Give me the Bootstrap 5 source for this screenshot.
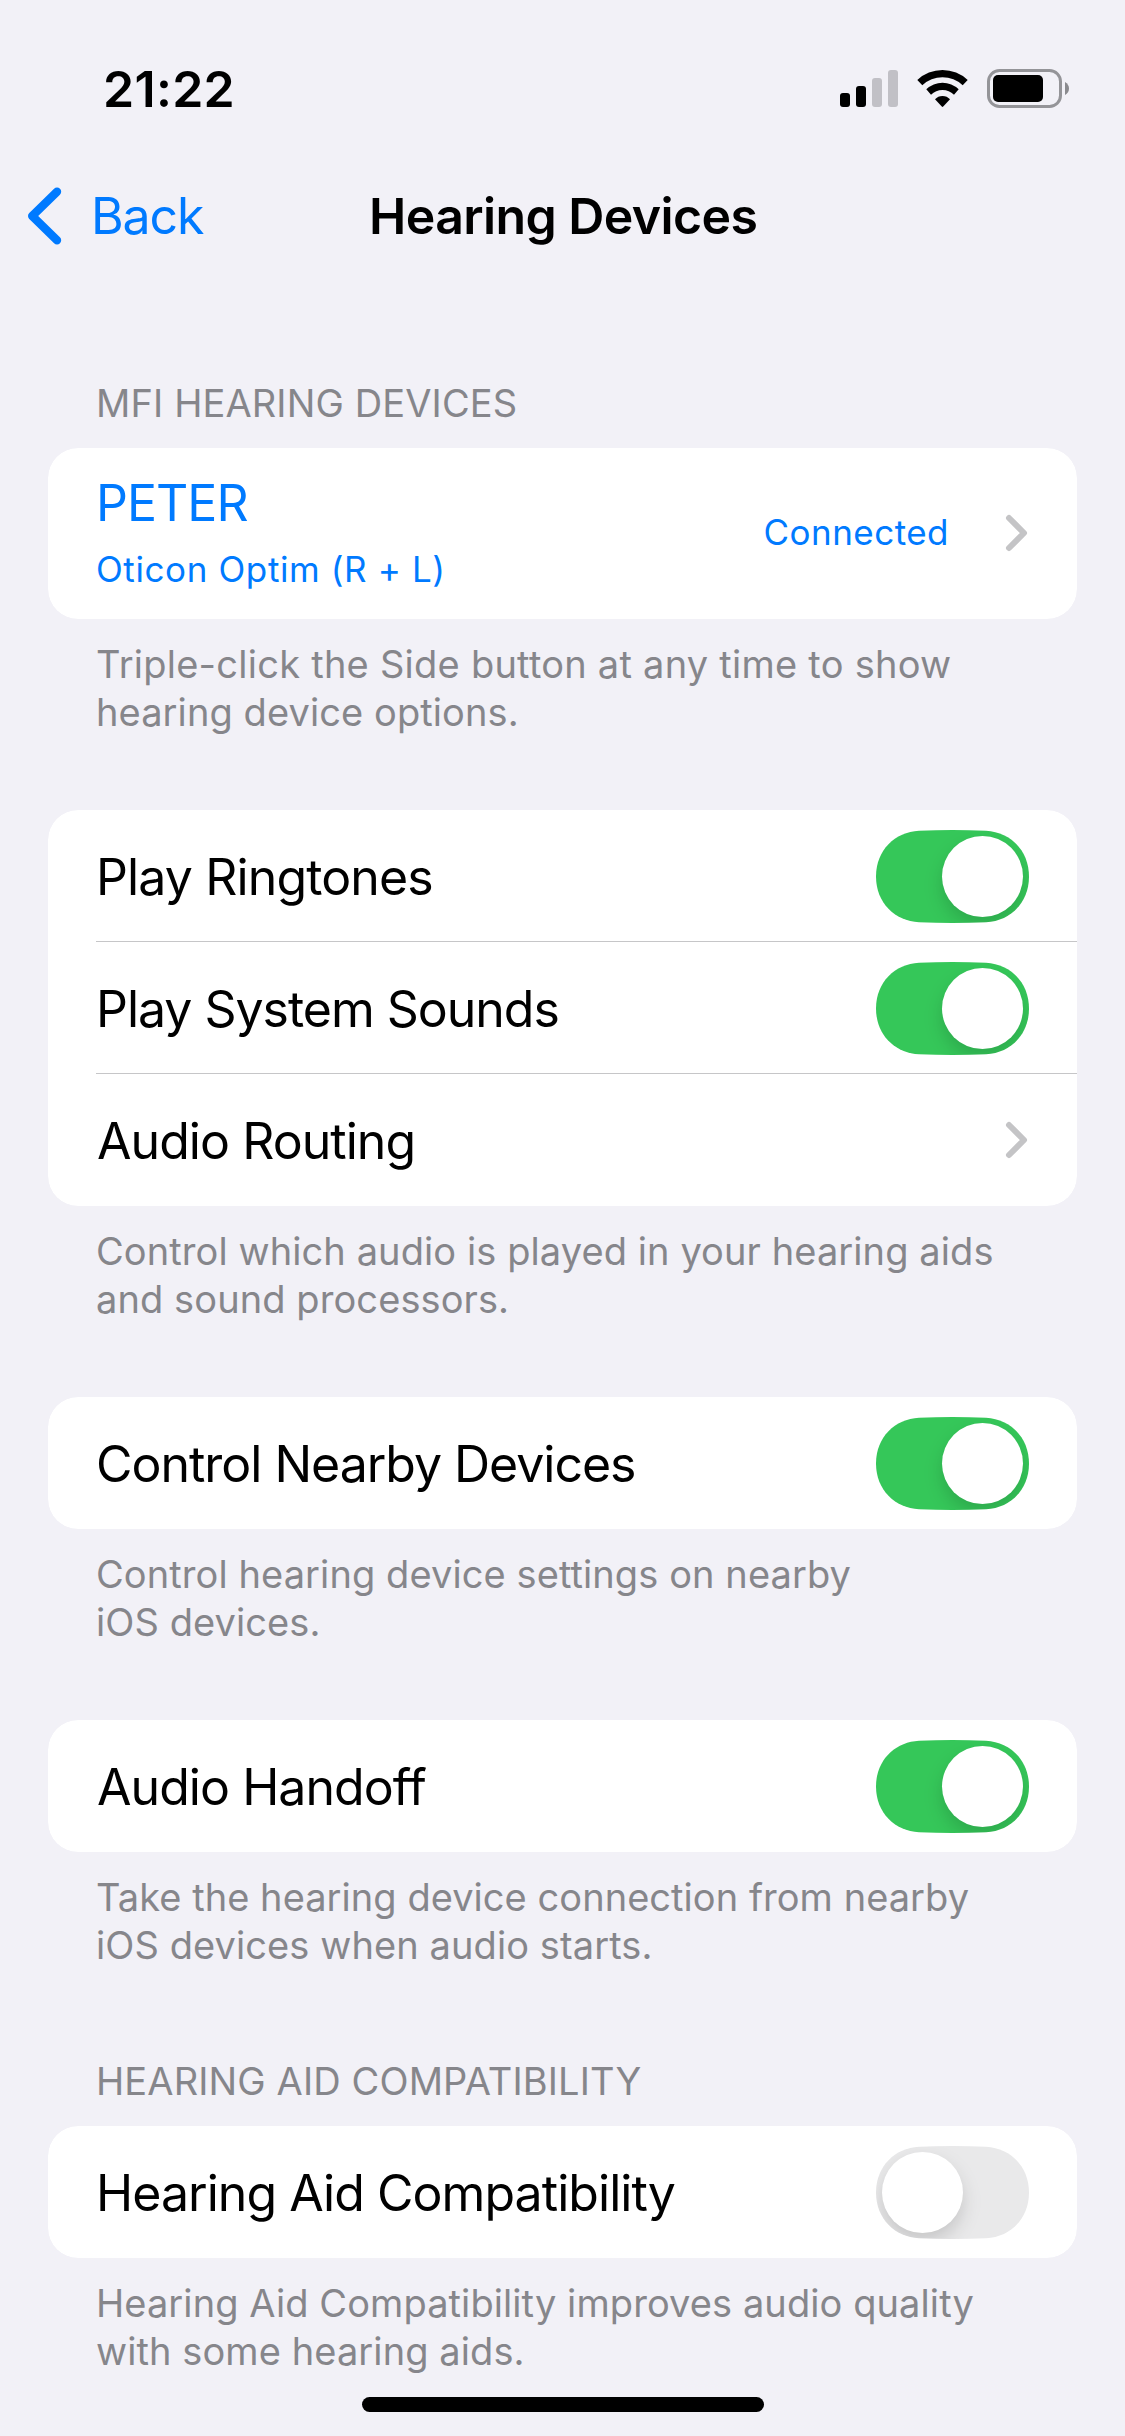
<!DOCTYPE html>
<html lang="en">
<head>
<meta charset="utf-8">
<meta name="viewport" content="width=device-width, initial-scale=1">
<title>Hearing Devices</title>
<link href="https://cdn.jsdelivr.net/npm/bootstrap@5.3.0/dist/css/bootstrap.min.css" rel="stylesheet">
<style>
  body { background: #f2f1f7; color: #000; font-family: Inter, "Liberation Sans", sans-serif; font-size: 50px; line-height: 60px; }
  .screen { width: 1125px; height: 2436px; }
  svg { display: block; flex: none; }
  .status-bar { padding: 59px 55px 0 103px; height: 119px; }
  .clock { letter-spacing: .3px; }
  .status-icons { gap: 19px; padding-top: 10px; }
  .nav-row { margin-top: 67px; height: 60px; padding-left: 27px; }
  .back-link { width: 342px; color: #007aff; gap: 29px; letter-spacing: -1.15px; }
  .page-title { font-size: inherit; line-height: inherit; letter-spacing: -.6px; }
  .group-title, .group-note { font-size: 38px; line-height: 48px; color: #86868b; margin: 0; padding: 0 48px; }
  .group-title { font-weight: 400; letter-spacing: .12px; margin-bottom: 21px; }
  .group-note { letter-spacing: .09px; margin-top: 21px; }
  .note-loose { letter-spacing: .25px; }
  .note-tight { letter-spacing: .05px; }
  .groups { padding: 0 48px; gap: 74px; }
  .groups .first-group { margin-top: 133px; }
  .groups .titled-group { margin-top: 14px; }
  .list-group { --bs-list-group-border-radius: 30px; --bs-list-group-border-width: 0; --bs-list-group-color: #000; overflow: hidden; }
  .list-group-item { padding: 0 0 0 48px; }
  .cell { height: 132px; padding-right: 48px; }
  .cell-chevron { padding-right: 49px; }
  .list-group-item:not(:last-child) .cell { box-shadow: inset 0 -1px #c6c6c8; }
  .cell-label { letter-spacing: -.95px; padding-top: 1px; }
  .label-ringtones { letter-spacing: -.87px; }
  .label-sounds { letter-spacing: -1.02px; }
  .label-nearby { letter-spacing: -1.02px; }
  .label-audio { padding-left: 1px; }
  .switch { margin-top: 1px; }
  .device-cell { height: 171px; padding-bottom: 2px; color: #007aff; }
  .device-name { letter-spacing: -.98px; }
  .device-model, .device-state { font-size: 35px; line-height: 46px; letter-spacing: .61px; }
  .device-model { margin-top: 13px; }
  .device-state { letter-spacing: .46px; margin: -2px 56px 0 0; }
  .home-bar { width: 402px; height: 15px; margin: 22px auto 0; background: #000; }
</style>
</head>
<body>
<svg width="0" height="0" class="position-absolute" aria-hidden="true">
  <defs>
    <filter id="knob-shadow" x="-40%" y="-40%" width="180%" height="180%"><feGaussianBlur stdDeviation="9"/></filter>
    <clipPath id="track-clip"><path d="M0 46.5C0 20 19 2 43 .7Q60 0 76.5 0T110 .7C134 2 153 20 153 46.5S134 91 110 92.3Q93 93 76.5 93T43 92.3C19 91 0 73 0 46.5z"/></clipPath>
    <symbol id="switch-on" viewBox="0 0 153 93">
      <g clip-path="url(#track-clip)">
        <rect width="153" height="93" fill="#35c759"/>
        <circle cx="106.500" cy="55.500" r="40.500" fill="#000" fill-opacity=".15" filter="url(#knob-shadow)"/>
      </g>
      <circle cx="106.500" cy="46.500" r="40.500" fill="#fff"/>
    </symbol>
    <symbol id="switch-off" viewBox="0 0 153 93">
      <g clip-path="url(#track-clip)">
        <rect width="153" height="93" fill="#e9e9ea"/>
        <circle cx="46.500" cy="55.500" r="40.500" fill="#000" fill-opacity=".15" filter="url(#knob-shadow)"/>
      </g>
      <circle cx="46.500" cy="46.500" r="40.500" fill="#fff"/>
    </symbol>
    <symbol id="chevron" viewBox="0 0 23 38">
      <path d="M4 4 19 19 4 34" fill="none" stroke="#c4c4c6" stroke-width="6" stroke-linecap="round" stroke-linejoin="round"/>
    </symbol>
  </defs>
</svg>

<div class="screen d-flex flex-column overflow-hidden">
  <header>
    <div class="status-bar d-flex justify-content-between align-items-start">
      <span class="clock fw-semibold">21:22</span>
      <div class="status-icons d-flex align-items-start">
        <svg width="58" height="39" viewBox="0 0 58 39">
          <rect x="0" y="24" width="10" height="14" rx="3"/>
          <rect x="16" y="17" width="10" height="21" rx="3"/>
          <rect x="32" y="9" width="10" height="29" rx="3" fill="#c1c0c6"/>
          <rect x="48" y="1" width="10" height="37" rx="3" fill="#c1c0c6"/>
        </svg>
        <svg width="51" height="39" viewBox="0 -1 51 39">
          <path d="M.3 10A36.800 36.800 0 0 1 50.700 10L45.700 15.300A29.500 29.500 0 0 0 5.300 15.300z"/>
          <path d="M9.300 19.300A23.200 23.200 0 0 1 41.700 19.300L37 24.700A16.400 16.400 0 0 0 14 24.700z"/>
          <path d="M18 29.300A10 10 0 0 1 33 29.300L26.200 36.600Q25.500 37.300 24.800 36.600z"/>
        </svg>
        <svg width="83" height="39" viewBox="0 0 83 39">
          <rect x="1.500" y="1.500" width="72" height="36" rx="11" fill="none" stroke="#949498" stroke-width="3"/>
          <rect x="6" y="6" width="50" height="27" rx="5"/>
          <path d="M78 13Q82 15.500 82 19.500T78 26z" fill="#8a8a8e"/>
        </svg>
      </div>
    </div>
    <div class="nav-row d-flex align-items-center">
      <a href="#" class="back-link d-flex align-items-center text-decoration-none">
        <svg width="35" height="58" viewBox="0 0 35 58"><path d="M30 4.700 5.200 29 30 53.300" fill="none" stroke="#007aff" stroke-width="8.400" stroke-linecap="round" stroke-linejoin="round"/></svg>
        <span>Back</span>
      </a>
      <h1 class="page-title fw-semibold mb-0">Hearing Devices</h1>
    </div>
  </header>

  <main class="groups d-flex flex-column">
    <section class="first-group">
      <h2 class="group-title">MFI HEARING DEVICES</h2>
      <div class="list-group">
        <div class="list-group-item">
          <div class="cell cell-chevron device-cell d-flex align-items-center">
            <div class="flex-grow-1">
              <div class="device-name">PETER</div>
              <div class="device-model">Oticon Optim (R + L)</div>
            </div>
            <span class="device-state">Connected</span>
            <svg width="23" height="38"><use href="#chevron"/></svg>
          </div>
        </div>
      </div>
      <p class="group-note"><span class="note-loose">Triple-click the Side button at any time to show</span><br>hearing device options.</p>
    </section>

    <section>
      <div class="list-group">
        <div class="list-group-item">
          <div class="cell d-flex align-items-center justify-content-between">
            <span class="cell-label label-ringtones">Play Ringtones</span>
            <svg class="switch" width="153" height="93"><use href="#switch-on"/></svg>
          </div>
        </div>
        <div class="list-group-item">
          <div class="cell d-flex align-items-center justify-content-between">
            <span class="cell-label label-sounds">Play System Sounds</span>
            <svg class="switch" width="153" height="93"><use href="#switch-on"/></svg>
          </div>
        </div>
        <div class="list-group-item">
          <div class="cell cell-chevron d-flex align-items-center justify-content-between">
            <span class="cell-label label-audio">Audio Routing</span>
            <svg width="23" height="38"><use href="#chevron"/></svg>
          </div>
        </div>
      </div>
      <p class="group-note">Control which audio is played in your hearing aids<br>and sound processors.</p>
    </section>

    <section>
      <div class="list-group">
        <div class="list-group-item">
          <div class="cell d-flex align-items-center justify-content-between">
            <span class="cell-label label-nearby">Control Nearby Devices</span>
            <svg class="switch" width="153" height="93"><use href="#switch-on"/></svg>
          </div>
        </div>
      </div>
      <p class="group-note">Control hearing device settings on nearby<br>iOS devices.</p>
    </section>

    <section>
      <div class="list-group">
        <div class="list-group-item">
          <div class="cell d-flex align-items-center justify-content-between">
            <span class="cell-label label-audio">Audio Handoff</span>
            <svg class="switch" width="153" height="93"><use href="#switch-on"/></svg>
          </div>
        </div>
      </div>
      <p class="group-note"><span class="note-tight">Take the hearing device connection from nearby</span><br>iOS devices when audio starts.</p>
    </section>

    <section class="titled-group">
      <h2 class="group-title">HEARING AID COMPATIBILITY</h2>
      <div class="list-group">
        <div class="list-group-item">
          <div class="cell d-flex align-items-center justify-content-between">
            <span class="cell-label">Hearing Aid Compatibility</span>
            <svg class="switch" width="153" height="93"><use href="#switch-off"/></svg>
          </div>
        </div>
      </div>
      <p class="group-note">Hearing Aid Compatibility improves audio quality<br>with some hearing aids.</p>
    </section>
  </main>

  <div class="home-bar rounded-pill flex-shrink-0"></div>
</div>
<script src="https://cdn.jsdelivr.net/npm/bootstrap@5.3.0/dist/js/bootstrap.bundle.min.js"></script>
</body>
</html>
